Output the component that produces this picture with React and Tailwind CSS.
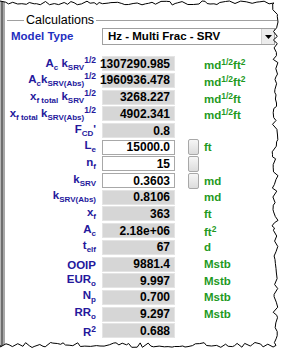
import React from "react";

// torn paper edge, seeded so it draws the same every time
function tornEdge() {
  let seed = 7;
  const rnd = () => {
    seed = (seed * 16807) % 2147483647;
    return (seed - 1) / 2147483646;
  };
  const top = [];
  for (let x = 0; x < 274; x += 2 + rnd() * 4) top.push([x, 3 + (rnd() - 0.5) * 4]);
  const right = [];
  for (let y = 4; y < 343; y += 2 + rnd() * 4) right.push([275 + (rnd() - 0.5) * 6, y]);
  const bottom = [];
  for (let x = 276; x > 0; x -= 2 + rnd() * 4) bottom.push([x, 345 + (rnd() - 0.5) * 5]);
  bottom.push([0, 345]);
  const edge = [...top, ...right, ...bottom];
  const line = edge.map((p) => p[0].toFixed(1) + "," + p[1].toFixed(1)).join(" ");
  const outside = "0,0 " + line + " 0,351 282,351 282,0";
  return { line, outside };
}

const edge = tornEdge();

const L = ({ children }) => <span className="text-[11.5px]">{children}</span>;
const Sub = ({ children }) => <span className="text-[8px] align-[-3px]">{children}</span>;
const Sup = ({ children }) => <span className="text-[8.5px] align-[4px]">{children}</span>;

const rows = [
  { label: <><L>A</L><Sub>c</Sub><L>&nbsp;k</L><Sub>SRV</Sub><Sup>1/2</Sup></>, value: "1307290.985", unit: <>md<Sup>1/2</Sup>ft<Sup>2</Sup></> },
  { label: <><L>A</L><Sub>c</Sub><L>k</L><Sub>SRV(Abs)</Sub><Sup>1/2</Sup></>, value: "1960936.478", unit: <>md<Sup>1/2</Sup>ft<Sup>2</Sup></> },
  { label: <><L>x</L><Sub>f total</Sub><L>&nbsp;k</L><Sub>SRV</Sub><Sup>1/2</Sup></>, value: "3268.227", unit: <>md<Sup>1/2</Sup>ft</> },
  { label: <><L>x</L><Sub>f total</Sub><L>&nbsp;k</L><Sub>SRV(Abs)</Sub><Sup>1/2</Sup></>, value: "4902.341", unit: <>md<Sup>1/2</Sup>ft</> },
  { label: <><L>F</L><Sub>CD</Sub><L>'</L></>, value: "0.8" },
  { label: <><L>L</L><Sub>e</Sub></>, value: "15000.0", input: true, button: true, unit: "ft" },
  { label: <><L>n</L><Sub>f</Sub></>, value: "15", input: true, button: true },
  { label: <><L>k</L><Sub>SRV</Sub></>, value: "0.3603", input: true, button: true, unit: "md" },
  { label: <><L>k</L><Sub>SRV(Abs)</Sub></>, value: "0.8106", unit: "md" },
  { label: <><L>x</L><Sub>f</Sub></>, value: "363", unit: "ft" },
  { label: <><L>A</L><Sub>c</Sub></>, value: "2.18e+06", unit: <>ft<Sup>2</Sup></> },
  { label: <><L>t</L><Sub>elf</Sub></>, value: "67", unit: "d" },
  { label: <L>OOIP</L>, value: "9881.4", unit: "Mstb" },
  { label: <><L>EUR</L><Sub>o</Sub></>, value: "9.997", unit: "Mstb" },
  { label: <><L>N</L><Sub>p</Sub></>, value: "0.700", unit: "Mstb" },
  { label: <><L>RR</L><Sub>o</Sub></>, value: "9.297", unit: "Mstb" },
  { label: <><L>R</L><Sup>2</Sup></>, value: "0.688" },
];

export default function App() {
  return (
    <div className="relative w-[282px] h-[351px] overflow-hidden bg-white font-['Liberation_Sans',Arial,sans-serif]">
      <div className="flex h-full">
        {/* window frame on the left */}
        <div className="flex h-full">
          <div className="w-[1px] bg-[#b8b8b8]" />
          <div className="w-[2px] bg-[#6e6e6e]" />
          <div className="w-[2px] bg-[#a8a8a8]" />
        </div>

        <div className="flex-1 pt-[13px]">
          {/* group header */}
          <div className="flex items-center h-[14px]">
            <div className="ml-[2px] w-[17px] h-px bg-[#a0a0a0]" />
            <span className="px-[2px] text-[12.5px] text-black leading-none">Calculations</span>
            <div className="flex-1 mr-[5px] h-px bg-[#a0a0a0]" />
          </div>

          {/* model type */}
          <div className="flex items-center mt-[1px]">
            <div className="w-[97px] pl-[6px] text-[11.5px] font-bold text-[#1f2fbf]">Model Type</div>
            <div className="flex w-[173px] h-[17px] border border-[#a0a0a0] bg-white">
              <div className="flex-1 pl-[5px] flex items-center text-[11.5px] font-bold text-black">Hz - Multi Frac - SRV</div>
              <div className="w-[13px] flex items-center justify-center bg-[#ececec] border-l border-[#d0d0d0]">
                <svg width="7" height="4" viewBox="0 0 7 4">
                  <path d="M0 0 L7 0 L3.5 4 Z" fill="#000" />
                </svg>
              </div>
            </div>
          </div>

          {/* values */}
          <div className="grid grid-cols-[92px_73px_auto] gap-x-[5px] auto-rows-[15px] gap-y-[1.7px] mt-[11px]">
            {rows.map((r, i) => (
              <React.Fragment key={i}>
                <div className="flex items-center justify-end pr-[1px] whitespace-nowrap font-bold text-[#24189c]">
                  <span className="leading-[12px]">{r.label}</span>
                </div>
                <div
                  className={`flex items-center justify-end pr-[4px] text-[12px] font-bold text-black leading-none border ${
                    r.input ? "bg-white border-[#a8a8a8]" : "bg-[#d6d6d6] border-[#e4e4e4]"
                  }`}
                >
                  {r.value}
                </div>
                <div className="flex items-center gap-[5px] pl-[8px]">
                  {r.button ? (
                    <div className="w-[11px] h-[16px] rounded-[2px] bg-gradient-to-b from-[#f6f6f6] to-[#dcdcdc] border border-[#a8a8a8]" />
                  ) : (
                    <div className="w-[11px]" />
                  )}
                  <span className="text-[11.5px] font-bold text-[#1f9a1f] whitespace-nowrap leading-[12px]">{r.unit}</span>
                </div>
              </React.Fragment>
            ))}
          </div>
        </div>
      </div>

      <svg className="absolute inset-0" width="282" height="351" viewBox="0 0 282 351">
        <polygon points={edge.outside} fill="#fff" />
        <polyline points={edge.line} fill="none" stroke="#000" strokeWidth="1" />
      </svg>
    </div>
  );
}
